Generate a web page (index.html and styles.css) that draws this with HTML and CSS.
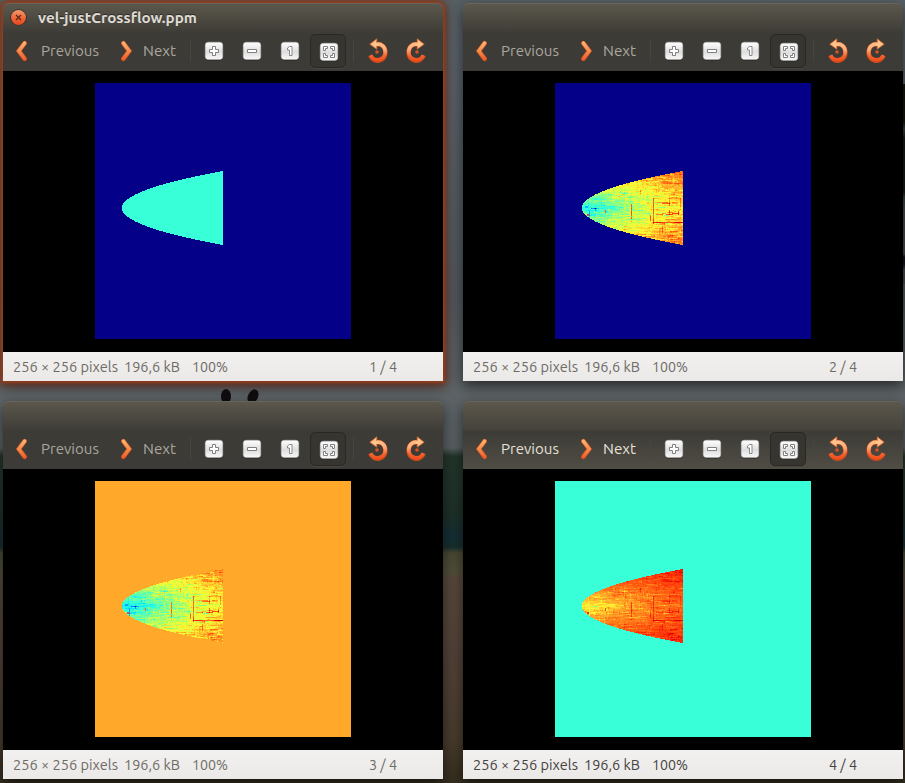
FILE: index.html
```
<!DOCTYPE html>
<html lang="en">
<head>
<meta charset="utf-8">
<title>Image viewer windows</title>
<link rel="stylesheet" href="styles.css">
</head>
<body>
<svg class="defs" width="0" height="0" aria-hidden="true">
  <defs>
    <linearGradient id="orange" x1="0" y1="0" x2="0" y2="1"><stop offset="0" stop-color="#f59a6c"/><stop offset=".5" stop-color="#f0693a"/><stop offset="1" stop-color="#e6481c"/></linearGradient>
    <linearGradient id="chev" gradientUnits="userSpaceOnUse" x1="0" y1="0" x2="0" y2="22"><stop offset="0" stop-color="#fdc080"/><stop offset=".5" stop-color="#f58c4c"/><stop offset="1" stop-color="#ee5024"/></linearGradient>
    <linearGradient id="rot" gradientUnits="userSpaceOnUse" x1="0" y1="1" x2="0" y2="24"><stop offset="0" stop-color="#ffc891"/><stop offset=".45" stop-color="#fbb07c"/><stop offset=".75" stop-color="#f4602c"/><stop offset="1" stop-color="#f04a1a"/></linearGradient>
    <linearGradient id="key" x1="0" y1="0" x2="0" y2="1"><stop offset="0" stop-color="#fff"/><stop offset=".55" stop-color="#dedede"/><stop offset="1" stop-color="#f8f8f8"/></linearGradient>
  </defs>
  <symbol id="prev" viewBox="0 0 14 22"><path d="M10.600 3.200 4.800 11l5.800 7.800" fill="none" stroke="#b84a1c" stroke-width="4.800" stroke-linecap="round" stroke-linejoin="miter"/><path d="M10.600 3.200 4.800 11l5.800 7.800" fill="none" stroke="url(#chev)" stroke-width="3.600" stroke-linecap="round" stroke-linejoin="miter"/></symbol>
  <symbol id="keycap" viewBox="0 0 20 20"><rect x=".8" y="1.500" width="18.400" height="18" rx="3.500" fill="#292825"/><rect x="1.200" y="1.200" width="17.600" height="17.300" rx="3" fill="url(#key)" stroke="#b4b4b4" stroke-width=".5"/></symbol>
  <symbol id="zin" viewBox="0 0 20 20"><use href="#keycap"/><path d="M8.500 5.500h3v3h3v3h-3v3h-3v-3h-3v-3h3z" fill="#fff" stroke="#808080"/></symbol>
  <symbol id="zout" viewBox="0 0 20 20"><use href="#keycap"/><path d="M5.500 8.500h9v3h-9z" fill="#fff" stroke="#808080"/></symbol>
  <symbol id="zone" viewBox="0 0 20 20"><use href="#keycap"/><path d="M9.500 5.500h2.500v9H9.500v-5.500h-2v-2z" fill="#fff" stroke="#888"/></symbol>
  <symbol id="zfit" viewBox="0 0 20 20"><use href="#keycap"/><path d="M4.500 8.500v-4h4v2h-2v2zM15.500 8.500v-4h-4v2h2v2zM4.500 11.500v4h4v-2h-2v-2zM15.500 11.500v4h-4v-2h2v-2z" fill="#fff" stroke="#808080"/></symbol>
  <symbol id="rotl" viewBox="0 0 22 25"><path d="M9 6.300C14.500 5.300 18.300 9 18.300 14a7.700 7.700 0 0 1-14.900 3.500" fill="none" stroke="#c94b1c" stroke-width="4.600"/><path d="M9 6.300C14.500 5.300 18.300 9 18.300 14a7.700 7.700 0 0 1-14.700 3.200" fill="none" stroke="url(#rot)" stroke-width="3.500"/><path d="M2.800 6.200 9.800.8v10.400z" fill="#ffc38b" stroke="#d4612c" stroke-width=".8"/><path d="M8.500 4.900h3v3h-3z" fill="#ffc38b"/><circle cx="10" cy="14" r="1.800" fill="#d9521f"/></symbol>
</svg>
<main class="desktop">
  <span class="ear ear-a"></span><span class="ear ear-b"></span><span class="foliage"></span>
</main>
<script src="viewer.js"></script>
</body>
</html>
```
FILE: styles.css
```
* { box-sizing: border-box; }
body { margin: 0; width: 905px; height: 783px; overflow: hidden; font-family: Ubuntu, "Noto Sans", sans-serif; }
.defs { position: absolute; }
.desktop {
  position: relative; width: 905px; height: 783px; padding: 3px 2px 0 3px;
  display: grid; grid-template-columns: 440px 440px; grid-template-rows: 378px 378px; gap: 20px;
  background: linear-gradient(#566064 0, #59636a 50px, #51585c 300px, #5e6467 385px, #5a6063 448px, #24382d 456px, #1e3229 515px, #163036 535px, #18302f 547px, #4a4a33 553px, #51503a 570px, #584a3c 578px, #54443a 650px, #4a3d2e 740px, #352f1f 783px);
}
.window { position: relative; display: flex; flex-direction: column; border-radius: 6px 6px 0 0; box-shadow: 0 5px 14px rgba(0,0,0,.6); }
.window.focused { box-shadow: 0 0 3px 2px #93401f, 0 1px 8px 3px rgba(110,36,12,.8), 0 6px 14px rgba(0,0,0,.4); }
.chrome { height: 68px; border-radius: 6px 6px 0 0; background: linear-gradient(#5b574c 0, #3d3b36 30px, #3c3b37); border-top: 1px solid #69645a; }
.window.active .chrome { background: linear-gradient(#5b574c 0, #46433c 28px, #3d3b36 29px, #504d45 67px); }
.title { height: 28px; display: flex; align-items: center; padding: 0 0 1px 7px; gap: 11px; color: #dfdbd2; font-size: 14px; font-weight: 700; }
.title .label { text-shadow: 0 -1px #2c2b28; }
.close { width: 17px; height: 17px; }
.toolbar { height: 39px; display: flex; align-items: center; padding: 0 0 2px 11px; color: #aaa79f; font-size: 15px; }
.active .toolbar { color: #e5e1d8; }
.chevron { display: block; width: 14px; height: 22px; }
.flip { transform: scaleX(-1); }
.prev-label { width: 92px; padding-left: 13px; }
.next-label { width: 56px; padding-left: 9px; }
.rule { width: 1px; height: 22px; background: #474540; margin-right: 13px; }
.tools { display: flex; align-items: center; }
.key { display: block; width: 20px; height: 20px; margin-right: 18px; }
.fit { width: 36px; height: 34px; margin: 1px 0 0 -8px; border: 1px solid #292825; border-radius: 5px; background: #363530; display: grid; place-items: center; box-shadow: 0 1px #49463f; }
.fit .key { margin: 1px 0 0 1px; }
.rotate { width: 22px; height: 25px; }
.end-rule { margin-left: 7px; margin-right: 13px; }
.rotate + .rotate { margin-left: 16px; }
.view { height: 281px; background: #000; padding: 12px 0 0 92px; }
.view canvas { display: block; width: 256px; height: 256px; }
.status { height: 29px; display: flex; align-items: center; padding: 1px 46px 0 10px; background: linear-gradient(#f2f1ef, #eae9e7); color: #6e6b67; font-size: 14px; }
.active .status { color: #45433f; }
.size { margin-left: 6px; }
.zoom { margin-left: 12px; }
.pages { margin-left: auto; }
.label { display: block; overflow: visible; fill: currentColor; }
.ear { position: absolute; top: 389px; width: 10px; height: 15px; border-radius: 50%; background: #100e10; }
.ear-a { left: 221px; }
.ear-b { left: 248px; transform: rotate(25deg); }
.foliage { position: absolute; left: 903px; top: 84px; width: 2px; height: 200px; background: linear-gradient(#14150c 0 38px, #33433f 45px, #141a18 55px 108px, #33423f 113px, #454b4e 125px 170px, #15131f 173px 180px, #454b4e 186px); }
```
FILE: viewer.js
```
const desktop = document.querySelector('.desktop');
const label = (text, width) =>
  `<svg class="label" width="${width}" height="20"><text x="0" y="15" textLength="${width}" lengthAdjust="spacingAndGlyphs">${text}</text></svg>`;
const icon = (name, cls) => `<svg class="${cls}"><use href="#${name}"/></svg>`;

const windows = [
  { title: 'vel-justCrossflow.ppm', cls: 'focused', bg: [5, 0, 136] },
  { cls: '', bg: [5, 0, 136], base: 0.385, gain: 0.275, edge: 0.075 },
  { cls: '', bg: [255, 168, 41], base: 0.36, gain: 0.28, edge: 0.07 },
  { cls: 'active', bg: [57, 255, 216], base: 0.63, gain: 0.165, edge: 0.055 },
];

// [value, red, green, blue] colour stops
const stops = [[0, 0, 0, 160], [.2, 0, 110, 255], [.32, 0, 205, 255], [.4, 40, 255, 225], [.5, 135, 255, 135],
  [.58, 225, 255, 60], [.63, 255, 245, 50], [.7, 255, 175, 41], [.78, 255, 105, 20], [.86, 255, 50, 8], [.93, 225, 0, 0], [1, 190, 0, 0]];
function colour(v) {
  const x = Math.max(0, Math.min(.999, v));
  const i = stops.findIndex(s => s[0] > x);
  const a = stops[i - 1], b = stops[i], t = (x - a[0]) / (b[0] - a[0]);
  return [1, 2, 3].map(n => Math.round(a[n] + (b[n] - a[n]) * t));
}

function paint(canvas, spec) {
  const ctx = canvas.getContext('2d');
  ctx.fillStyle = `rgb(${spec.bg})`;
  ctx.fillRect(0, 0, 256, 256);
  let seed = 7919;
  const rnd = () => ((seed = (seed * 1664525 + 1013904223) >>> 0) / 4294967296);
  const field = Array.from({ length: 74 }, () => new Float32Array(101));
  const warm = spec.base > 0.5;
  const scale = warm ? 0.7 : 1;
  const streak = (count, w, h, amp) => {
    for (let i = 0; i < count; i++) {
      const x = Math.floor(rnd() * 101), y = Math.floor(rnd() * 74);
      const lw = 1 + Math.floor(rnd() * w), lh = 1 + Math.floor(rnd() * h), a = (rnd() - 0.5) * amp * scale;
      for (let r = y; r < Math.min(74, y + lh); r++)
        for (let c = x; c < Math.min(101, x + lw); c++) field[r][c] += a;
    }
  };
  streak(850, 12, 1, 0.13);
  streak(400, 1, 6, 0.11);
  streak(2200, 2, 2, 0.075);
  // [column, row, width, height, strength] of the strongest flow features
  const marks = [[71, 27, 1, 26, .2], [49, 33, 1, 15, .27], [68, 44, 1, 6, .2], [23, 39, 1, 3, .38],
    [71, 51, 30, 1, .2], [77, 52, 7, 1, .16], [93, 51, 8, 1, .1], [72, 31, 14, 1, .14], [80, 32, 8, 1, .18],
    [90, 31, 6, 1, .14], [74, 43, 7, 1, .19], [80, 42, 4, 1, .16], [84, 43, 7, 1, .22], [90, 42, 7, 1, .2],
    [85, 41, 6, 1, .14], [76, 44, 5, 1, .12],
    [87, 29, 1, 6, .12], [87, 39, 1, 5, .18], [98, 27, 1, 12, .1], [96, 40, 1, 4, .2], [80, 55, 1, 7, .12],
    [5, 43, 2, 2, .42], [7, 40, 1, 8, -.17], [9, 37, 6, 1, -.16], [13, 37, 1, 3, -.14], [3, 35, 3, 2, -.1]];
  for (const [x, y, w, h, a] of marks)
    for (let r = y; r < y + h; r++) for (let c = x; c < Math.min(101, x + w); c++) field[r][c] += a * (warm ? .5 : 1);
  for (let r = 0; r < 74; r++) {
    const d = Math.abs(r - 36.5) / 37;
    for (let x = Math.round(d * d * 101); x < 101; x++) {
      const half = Math.max(.12, Math.sqrt((x + 1) / 101));
      const k = d / half;
      const v = spec.base + spec.gain * Math.pow(x / 101, .9) + spec.edge * k * k + .05 * k * Math.min(1, x / 30) + field[r][x];
      ctx.fillStyle = spec.gain ? `rgb(${colour(Math.min(.94, v))})` : 'rgb(57,255,216)';
      ctx.fillRect(27 + x, 88 + r, 1, 1);
    }
  }
}

windows.forEach((spec, i) => {
  const el = document.createElement('section');
  el.className = `window ${spec.cls}`;
  el.innerHTML = `
    <header class="chrome">
      <div class="title">${spec.title ? `<svg class="close" viewBox="0 0 17 17"><circle cx="8.5" cy="8.5" r="8.300" fill="#35302a"/><circle cx="8.5" cy="8.5" r="7.500" fill="url(#orange)"/><path d="m6 6 5 5m0-5-5 5" stroke="#5b2717" stroke-width="1.300"/></svg>${label(spec.title, 159)}` : ''}</div>
      <nav class="toolbar">
        ${icon('prev', 'chevron')}<div class="prev-label">${label('Previous', 58)}</div>
        ${icon('prev', 'chevron flip')}<div class="next-label">${label('Next', 33)}</div>
        <i class="rule"></i>
        <div class="tools">${icon('zin', 'key')}${icon('zout', 'key')}${icon('zone', 'key')}<div class="fit">${icon('zfit', 'key')}</div></div>
        <i class="rule end-rule"></i>
        ${icon('rotl', 'rotate')}${icon('rotl', 'rotate flip')}
      </nav>
    </header>
    <div class="view"><canvas width="256" height="256"></canvas></div>
    <footer class="status">${label('256 × 256 pixels', 105)}<div class="size">${label('196,6 kB', 56)}</div><div class="zoom">${label('100%', 36)}</div><div class="pages">${label(`${i + 1} / 4`, 28)}</div></footer>`;
  desktop.append(el);
  paint(el.querySelector('canvas'), spec);
});
```
